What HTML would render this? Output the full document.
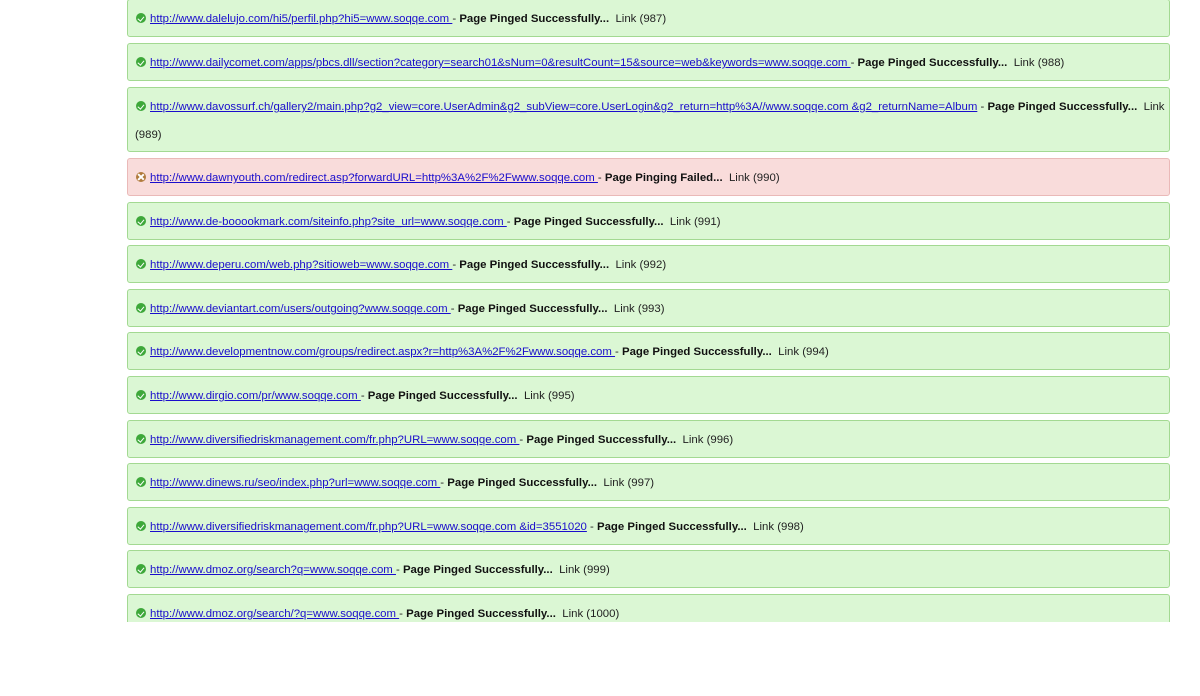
<!DOCTYPE html>
<html><head><meta charset="utf-8"><style>
body{margin:0;width:1200px;height:696px;background:#fff;overflow:hidden;font-family:"Liberation Sans",sans-serif;font-size:11.4px;color:#222}
.wrap{position:absolute;left:0;top:0;width:1200px;height:622px;overflow:hidden}
.b{position:absolute;left:127px;width:1041px;height:36px;background:#dbf7d4;border:1px solid #a3d992;border-radius:3px;box-sizing:content-box}
.r{background:#f9dcdb;border-color:#eab9b8}
.t{position:absolute;left:22px;top:12px;white-space:nowrap;line-height:14px}
a{color:#1a0dcc;text-decoration:underline}
b{color:#111}
.i{position:absolute;left:8px;top:13px;width:10px;height:10px;border-radius:50%;background:#3ea83a}
.i:after{content:"";position:absolute;left:3px;top:1.5px;width:2.5px;height:5px;border:solid #fff;border-width:0 1.6px 1.6px 0;transform:rotate(40deg)}
.x{background:#b07a3c}
.x:after{left:4px;top:1px;width:1.6px;height:8px;border:0;background:#fff;transform:rotate(45deg)}
.x:before{content:"";position:absolute;left:4px;top:1px;width:1.6px;height:8px;background:#fff;transform:rotate(-45deg)}
</style></head><body><div class="wrap">
<div class="b" style="top:-1px"><span class="i"></span><span class="t"><a>http://www.dalelujo.com/hi5/perfil.php?hi5=www.soqqe.com </a> - <b>Page Pinged Successfully...</b> &nbsp;Link (987)</span></div>
<div class="b" style="top:43px"><span class="i"></span><span class="t"><a>http://www.dailycomet.com/apps/pbcs.dll/section?category=search01&amp;sNum=0&amp;resultCount=15&amp;source=web&amp;keywords=www.soqqe.com </a> - <b>Page Pinged Successfully...</b> &nbsp;Link (988)</span></div>
<div class="b" style="top:87px;height:63px"><span class="i"></span><span class="t">
<a>http://www.davossurf.ch/gallery2/main.php?g2_view=core.UserAdmin&amp;g2_subView=core.UserLogin&amp;g2_return=http%3A//www.soqqe.com &amp;g2_returnName=Album</a> - <b>Page Pinged Successfully...</b> &nbsp;Link</span><span class="t" style="left:7px;top:40px">(989)</span></div>
<div class="b r" style="top:158px"><span class="i x"></span><span class="t"><a>http://www.dawnyouth.com/redirect.asp?forwardURL=http%3A%2F%2Fwww.soqqe.com </a> - <b>Page Pinging Failed...</b> &nbsp;Link (990)</span></div>
<div class="b" style="top:202px"><span class="i"></span><span class="t"><a>http://www.de-booookmark.com/siteinfo.php?site_url=www.soqqe.com </a> - <b>Page Pinged Successfully...</b> &nbsp;Link (991)</span></div>
<div class="b" style="top:245px"><span class="i"></span><span class="t"><a>http://www.deperu.com/web.php?sitioweb=www.soqqe.com </a> - <b>Page Pinged Successfully...</b> &nbsp;Link (992)</span></div>
<div class="b" style="top:289px"><span class="i"></span><span class="t"><a>http://www.deviantart.com/users/outgoing?www.soqqe.com </a> - <b>Page Pinged Successfully...</b> &nbsp;Link (993)</span></div>
<div class="b" style="top:332px"><span class="i"></span><span class="t"><a>http://www.developmentnow.com/groups/redirect.aspx?r=http%3A%2F%2Fwww.soqqe.com </a> - <b>Page Pinged Successfully...</b> &nbsp;Link (994)</span></div>
<div class="b" style="top:376px"><span class="i"></span><span class="t"><a>http://www.dirgio.com/pr/www.soqqe.com </a> - <b>Page Pinged Successfully...</b> &nbsp;Link (995)</span></div>
<div class="b" style="top:420px"><span class="i"></span><span class="t"><a>http://www.diversifiedriskmanagement.com/fr.php?URL=www.soqqe.com </a> - <b>Page Pinged Successfully...</b> &nbsp;Link (996)</span></div>
<div class="b" style="top:463px"><span class="i"></span><span class="t"><a>http://www.dinews.ru/seo/index.php?url=www.soqqe.com </a> - <b>Page Pinged Successfully...</b> &nbsp;Link (997)</span></div>
<div class="b" style="top:507px"><span class="i"></span><span class="t"><a>http://www.diversifiedriskmanagement.com/fr.php?URL=www.soqqe.com &amp;id=3551020</a> - <b>Page Pinged Successfully...</b> &nbsp;Link (998)</span></div>
<div class="b" style="top:550px"><span class="i"></span><span class="t"><a>http://www.dmoz.org/search?q=www.soqqe.com </a> - <b>Page Pinged Successfully...</b> &nbsp;Link (999)</span></div>
<div class="b" style="top:594px"><span class="i"></span><span class="t"><a>http://www.dmoz.org/search/?q=www.soqqe.com </a> - <b>Page Pinged Successfully...</b> &nbsp;Link (1000)</span></div>
</div></body></html>
